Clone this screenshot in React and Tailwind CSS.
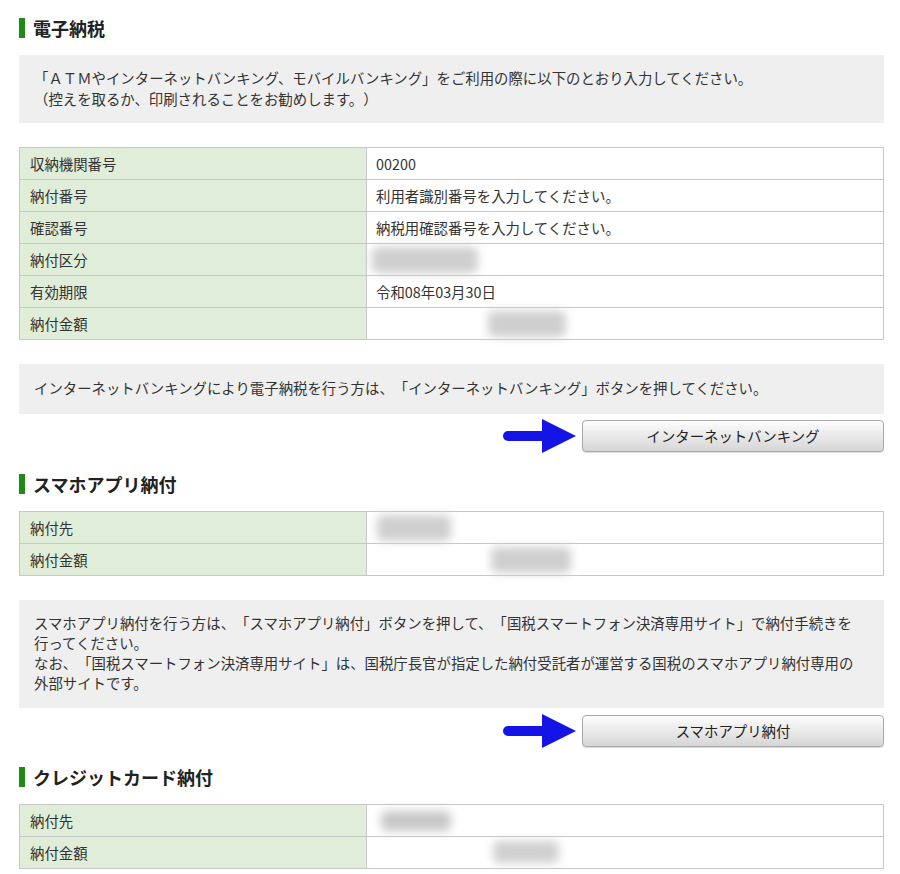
import React from "react";

const font = { fontFamily: '"Noto Sans CJK JP", "Noto Sans", sans-serif' };

function Heading({ children }) {
  return (
    <div className="flex items-center h-[20px] gap-[8px]">
      <div className="w-[6px] h-[20px] bg-[#1f8a17]" />
      <div className="text-[18px] font-bold text-[#222] leading-[20px]">{children}</div>
    </div>
  );
}

function Blur({ left, width, top = 3, height = 26, color = "#cfcfcf" }) {
  return (
    <div
      className="absolute blur-[5px] rounded-[6px]"
      style={{ left, width, top, height, background: color }}
    />
  );
}

function Row({ label, children, blur }) {
  return (
    <tr className="h-[32px]">
      <td className="w-[347px] bg-[#e0eed9] border border-[#c8c8c8] px-[10px] text-[14.4px] text-[#333] leading-[20px]">
        {label}
      </td>
      <td className="border border-[#c8c8c8] px-[9px] text-[14.4px] text-[#333] leading-[20px] relative">
        {children}
        {blur}
      </td>
    </tr>
  );
}

function Table({ children }) {
  return (
    <table className="w-full border-collapse table-fixed">
      <tbody>{children}</tbody>
    </table>
  );
}

function Arrow() {
  return (
    <svg width="74" height="34" viewBox="0 0 74 34">
      <path d="M5 12 H39 V0 L73 17 L39 34 V22 H5 A5 5 0 0 1 5 12 Z" fill="#1414e6" />
    </svg>
  );
}

function Button({ children }) {
  return (
    <div className="flex justify-end items-center gap-[5px] h-[34px]">
      <Arrow />
      <div className="w-[302px] h-[32px] flex items-center justify-center rounded-[4px] border border-[#a9a9a9] bg-gradient-to-b from-[#fdfdfd] to-[#d6d6d6] text-[14.4px] text-[#222] shadow-[0_1px_1px_rgba(0,0,0,0.15)]">
        {children}
      </div>
    </div>
  );
}

function Info({ children, className = "" }) {
  return (
    <div className={"bg-[#efefef] pl-[15px] pr-[22px] text-[14.4px] text-[#333] " + className}>
      {children}
    </div>
  );
}

export default function App() {
  return (
    <div className="bg-white min-h-[874px] pl-[19px] pr-[16px] pt-[18px] [text-spacing-trim:space-all]" style={font}>
      <Heading>電子納税</Heading>
      <Info className="mt-[17px] pt-[12px] pb-[14px] leading-[21px]">
        「ＡＴＭやインターネットバンキング、モバイルバンキング」をご利用の際に以下のとおり入力してください。
        <br />
        （控えを取るか、印刷されることをお勧めします。）
      </Info>
      <div className="mt-[24px]">
        <Table>
          <Row label="収納機関番号">00200</Row>
          <Row label="納付番号">利用者識別番号を入力してください。</Row>
          <Row label="確認番号">納税用確認番号を入力してください。</Row>
          <Row label="納付区分" blur={<Blur left={5} width={106} />}>&nbsp;</Row>
          <Row label="有効期限">令和08年03月30日</Row>
          <Row label="納付金額" blur={<Blur left={121} width={78} />}>&nbsp;</Row>
        </Table>
      </div>
      <Info className="mt-[24px] pt-[13px] pb-[16px] leading-[21px]">
        インターネットバンキングにより電子納税を行う方は、「インターネットバンキング」ボタンを押してください。
      </Info>
      <div className="mt-[5px]">
        <Button>インターネットバンキング</Button>
      </div>

      <div className="mt-[21px]">
        <Heading>スマホアプリ納付</Heading>
      </div>
      <div className="mt-[17px]">
        <Table>
          <Row label="納付先" blur={<Blur left={10} width={74} />}>&nbsp;</Row>
          <Row label="納付金額" blur={<Blur left={124} width={80} />}>&nbsp;</Row>
        </Table>
      </div>
      <Info className="mt-[24px] pt-[13px] pb-[15px] leading-[20px]">
        スマホアプリ納付を行う方は、「スマホアプリ納付」ボタンを押して、「国税スマートフォン決済専用サイト」で納付手続きを行ってください。
        <br />
        なお、「国税スマートフォン決済専用サイト」は、国税庁長官が指定した納付受託者が運営する国税のスマホアプリ納付専用の外部サイトです。
      </Info>
      <div className="mt-[6px]">
        <Button>スマホアプリ納付</Button>
      </div>

      <div className="mt-[19px]">
        <Heading>クレジットカード納付</Heading>
      </div>
      <div className="mt-[17px] relative">
        <Table>
          <Row label="納付先" blur={<Blur left={14} width={70} top={6} height={20} color="#c8c8c8" />}>&nbsp;</Row>
          <Row label="納付金額" blur={<Blur left={126} width={66} top={4} height={22} color="#d0d0d0" />}>&nbsp;</Row>
        </Table>
      </div>
    </div>
  );
}
